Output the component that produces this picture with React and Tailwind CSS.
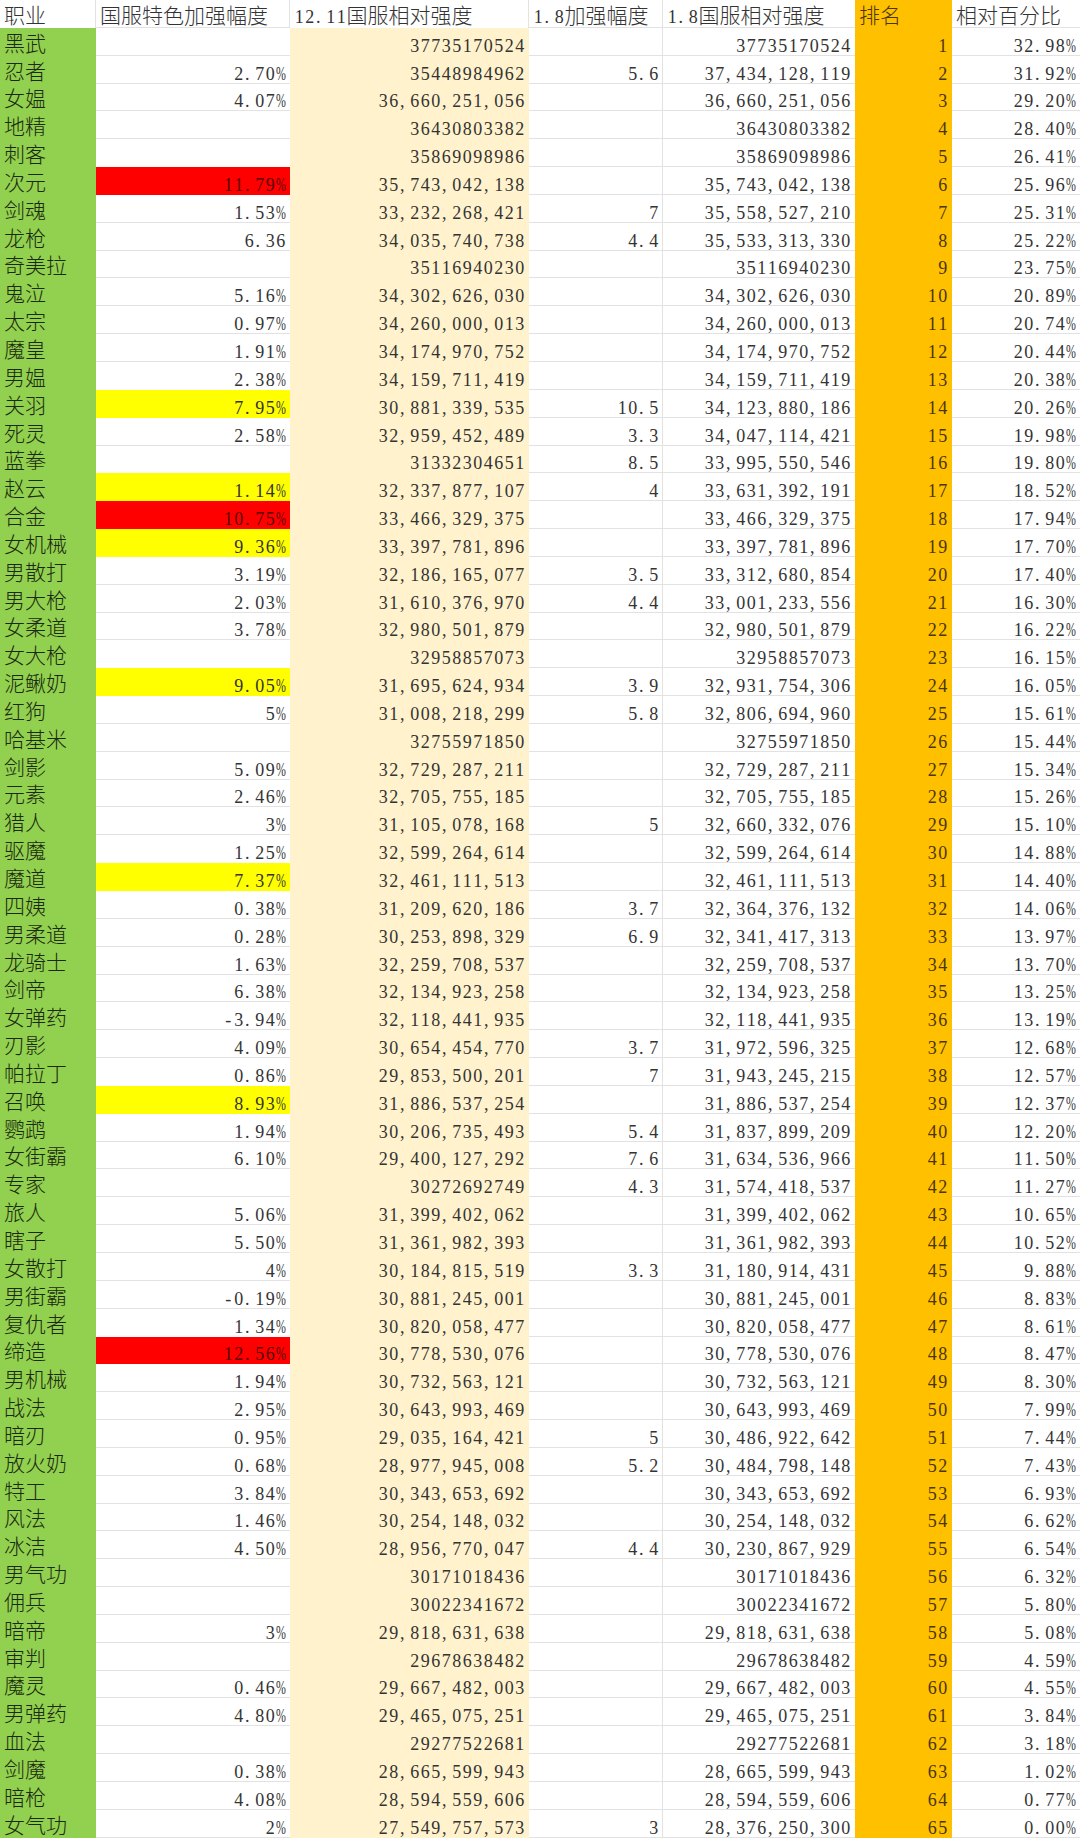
import React from "react";

const header = ["职业", "国服特色加强幅度", "12.11国服相对强度", "1.8加强幅度", "1.8国服相对强度", "排名", "相对百分比"];

// [职业, 国服特色加强幅度, 12.11相对强度, 1.8加强幅度, 1.8相对强度, 排名, 百分比, 高亮]
const rows = [
  ["黑武", "", "37735170524", "", "37735170524", "1", "32.98%"],
  ["忍者", "2.70%", "35448984962", "5.6", "37,434,128,119", "2", "31.92%"],
  ["女媪", "4.07%", "36,660,251,056", "", "36,660,251,056", "3", "29.20%"],
  ["地精", "", "36430803382", "", "36430803382", "4", "28.40%"],
  ["刺客", "", "35869098986", "", "35869098986", "5", "26.41%"],
  ["次元", "11.79%", "35,743,042,138", "", "35,743,042,138", "6", "25.96%", "r"],
  ["剑魂", "1.53%", "33,232,268,421", "7", "35,558,527,210", "7", "25.31%"],
  ["龙枪", "6.36", "34,035,740,738", "4.4", "35,533,313,330", "8", "25.22%"],
  ["奇美拉", "", "35116940230", "", "35116940230", "9", "23.75%"],
  ["鬼泣", "5.16%", "34,302,626,030", "", "34,302,626,030", "10", "20.89%"],
  ["太宗", "0.97%", "34,260,000,013", "", "34,260,000,013", "11", "20.74%"],
  ["魔皇", "1.91%", "34,174,970,752", "", "34,174,970,752", "12", "20.44%"],
  ["男媪", "2.38%", "34,159,711,419", "", "34,159,711,419", "13", "20.38%"],
  ["关羽", "7.95%", "30,881,339,535", "10.5", "34,123,880,186", "14", "20.26%", "y"],
  ["死灵", "2.58%", "32,959,452,489", "3.3", "34,047,114,421", "15", "19.98%"],
  ["蓝拳", "", "31332304651", "8.5", "33,995,550,546", "16", "19.80%"],
  ["赵云", "1.14%", "32,337,877,107", "4", "33,631,392,191", "17", "18.52%", "y"],
  ["合金", "10.75%", "33,466,329,375", "", "33,466,329,375", "18", "17.94%", "r"],
  ["女机械", "9.36%", "33,397,781,896", "", "33,397,781,896", "19", "17.70%", "y"],
  ["男散打", "3.19%", "32,186,165,077", "3.5", "33,312,680,854", "20", "17.40%"],
  ["男大枪", "2.03%", "31,610,376,970", "4.4", "33,001,233,556", "21", "16.30%"],
  ["女柔道", "3.78%", "32,980,501,879", "", "32,980,501,879", "22", "16.22%"],
  ["女大枪", "", "32958857073", "", "32958857073", "23", "16.15%"],
  ["泥鳅奶", "9.05%", "31,695,624,934", "3.9", "32,931,754,306", "24", "16.05%", "y"],
  ["红狗", "5%", "31,008,218,299", "5.8", "32,806,694,960", "25", "15.61%"],
  ["哈基米", "", "32755971850", "", "32755971850", "26", "15.44%"],
  ["剑影", "5.09%", "32,729,287,211", "", "32,729,287,211", "27", "15.34%"],
  ["元素", "2.46%", "32,705,755,185", "", "32,705,755,185", "28", "15.26%"],
  ["猎人", "3%", "31,105,078,168", "5", "32,660,332,076", "29", "15.10%"],
  ["驱魔", "1.25%", "32,599,264,614", "", "32,599,264,614", "30", "14.88%"],
  ["魔道", "7.37%", "32,461,111,513", "", "32,461,111,513", "31", "14.40%", "y"],
  ["四姨", "0.38%", "31,209,620,186", "3.7", "32,364,376,132", "32", "14.06%"],
  ["男柔道", "0.28%", "30,253,898,329", "6.9", "32,341,417,313", "33", "13.97%"],
  ["龙骑士", "1.63%", "32,259,708,537", "", "32,259,708,537", "34", "13.70%"],
  ["剑帝", "6.38%", "32,134,923,258", "", "32,134,923,258", "35", "13.25%"],
  ["女弹药", "-3.94%", "32,118,441,935", "", "32,118,441,935", "36", "13.19%"],
  ["刃影", "4.09%", "30,654,454,770", "3.7", "31,972,596,325", "37", "12.68%"],
  ["帕拉丁", "0.86%", "29,853,500,201", "7", "31,943,245,215", "38", "12.57%"],
  ["召唤", "8.93%", "31,886,537,254", "", "31,886,537,254", "39", "12.37%", "y"],
  ["鹦鹉", "1.94%", "30,206,735,493", "5.4", "31,837,899,209", "40", "12.20%"],
  ["女街霸", "6.10%", "29,400,127,292", "7.6", "31,634,536,966", "41", "11.50%"],
  ["专家", "", "30272692749", "4.3", "31,574,418,537", "42", "11.27%"],
  ["旅人", "5.06%", "31,399,402,062", "", "31,399,402,062", "43", "10.65%"],
  ["瞎子", "5.50%", "31,361,982,393", "", "31,361,982,393", "44", "10.52%"],
  ["女散打", "4%", "30,184,815,519", "3.3", "31,180,914,431", "45", "9.88%"],
  ["男街霸", "-0.19%", "30,881,245,001", "", "30,881,245,001", "46", "8.83%"],
  ["复仇者", "1.34%", "30,820,058,477", "", "30,820,058,477", "47", "8.61%"],
  ["缔造", "12.56%", "30,778,530,076", "", "30,778,530,076", "48", "8.47%", "r"],
  ["男机械", "1.94%", "30,732,563,121", "", "30,732,563,121", "49", "8.30%"],
  ["战法", "2.95%", "30,643,993,469", "", "30,643,993,469", "50", "7.99%"],
  ["暗刃", "0.95%", "29,035,164,421", "5", "30,486,922,642", "51", "7.44%"],
  ["放火奶", "0.68%", "28,977,945,008", "5.2", "30,484,798,148", "52", "7.43%"],
  ["特工", "3.84%", "30,343,653,692", "", "30,343,653,692", "53", "6.93%"],
  ["风法", "1.46%", "30,254,148,032", "", "30,254,148,032", "54", "6.62%"],
  ["冰洁", "4.50%", "28,956,770,047", "4.4", "30,230,867,929", "55", "6.54%"],
  ["男气功", "", "30171018436", "", "30171018436", "56", "6.32%"],
  ["佣兵", "", "30022341672", "", "30022341672", "57", "5.80%"],
  ["暗帝", "3%", "29,818,631,638", "", "29,818,631,638", "58", "5.08%"],
  ["审判", "", "29678638482", "", "29678638482", "59", "4.59%"],
  ["魔灵", "0.46%", "29,667,482,003", "", "29,667,482,003", "60", "4.55%"],
  ["男弹药", "4.80%", "29,465,075,251", "", "29,465,075,251", "61", "3.84%"],
  ["血法", "", "29277522681", "", "29277522681", "62", "3.18%"],
  ["剑魔", "0.38%", "28,665,599,943", "", "28,665,599,943", "63", "1.02%"],
  ["暗枪", "4.08%", "28,594,559,606", "", "28,594,559,606", "64", "0.77%"],
  ["女气功", "2%", "27,549,757,573", "3", "28,376,250,300", "65", "0.00%"],
];

// SimSun style: every latin char takes half an em
function Chars({ s }) {
  return s.split("").map((c, i) => {
    if (/[\u2e80-\uffff]/.test(c))
      return (
        <span key={i} className="font-['Noto_Sans_CJK_SC',sans-serif] font-light text-[21px]">
          {c}
        </span>
      );
    if (c === "%")
      return (
        <span key={i} className="inline-block w-[10.5px] text-[18px]">
          <span className="inline-block scale-x-[0.66] origin-left">%</span>
        </span>
      );
    if (c === "," || c === ".")
      return (
        <span key={i} className="inline-block w-[10.5px] pl-[1px] text-left text-[18px]">
          {c}
        </span>
      );
    return (
      <span key={i} className="inline-block w-[10.5px] text-center text-[18px]">
        {c}
      </span>
    );
  });
}

// background of data cell by column
function fillOf(row, col) {
  if (col === 0) return "bg-[#92d050] text-[#1b2a0e]";
  if (col === 2) return "bg-[#fff2cc]";
  if (col === 5) return "bg-[#ffc000] text-[#4a360c]";
  if (col === 1 && row[7] === "r") return "bg-[#ff0000] text-[#5a0000]";
  if (col === 1 && row[7] === "y") return "bg-[#ffff00]";
  return null;
}

// gridlines drawn as inset shadows so they don't shift the text
function lines(b, r) {
  if (b && r) return "shadow-[inset_0_-1px_0_#e2e2e2,inset_-1px_0_0_#e2e2e2]";
  if (b) return "shadow-[inset_0_-1px_0_#e2e2e2]";
  if (r) return "shadow-[inset_-1px_0_0_#e2e2e2]";
  return "";
}

function Cell({ text, fill, left, lineB, lineR }) {
  return (
    <div
      className={[
        "h-[27.85px] flex items-end leading-none whitespace-nowrap",
        left ? "justify-start pl-[4px] pb-[2px]" : "justify-end pr-[4px] pb-[1px]",
        fill || "bg-white",
        lines(lineB, lineR),
      ].join(" ")}
    >
      <span>
        <Chars s={text} />
      </span>
    </div>
  );
}

export default function App() {
  return (
    <div className="w-[1080px] h-[1838px] overflow-hidden bg-white text-[#333] font-['Liberation_Serif','Noto_Sans_CJK_SC',serif]">
      <div className="grid grid-cols-[96px_194px_239px_134px_192px_97px_128px]">
        {header.map((h, c) => (
          <Cell
            key={"h" + c}
            text={h}
            left
            fill={c === 5 ? "bg-[#ffc000] text-[#4a360c]" : null}
            lineB={c !== 5 && !fillOf(rows[0], c)}
            lineR={c !== 5 && c !== 4 && c !== 6}
          />
        ))}
        {rows.map((row, r) =>
          row.slice(0, 7).map((v, c) => {
            const fill = fillOf(row, c);
            const below = rows[r + 1];
            const right = c < 6 ? fillOf(row, c + 1) : "x";
            return (
              <Cell
                key={r + "-" + c}
                text={v}
                left={c === 0}
                fill={fill}
                lineB={!fill && (!below || !fillOf(below, c))}
                lineR={!fill && !right}
              />
            );
          })
        )}
      </div>
    </div>
  );
}
